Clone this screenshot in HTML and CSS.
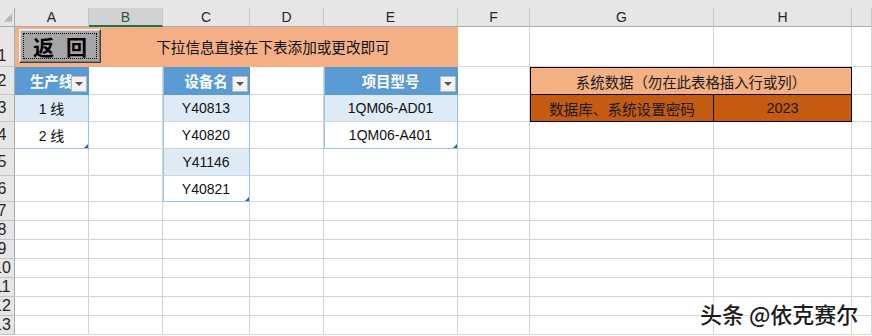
FILE: index.html
```html
<!DOCTYPE html>
<html lang="zh-CN">
<head>
<meta charset="utf-8">
<title>Sheet</title>
<link rel="stylesheet" href="styles.css">
</head>
<body>
<div class="top"></div>
<div class="sheet">
  <!-- column headers -->
  <div class="ch corner"><svg width="15" height="19" viewBox="0 0 15 19"><polygon points="13,5 13,14 4,14" fill="#b8b8b8"/></svg></div>
  <div class="ch">A</div>
  <div class="ch sel">B</div>
  <div class="ch">C</div>
  <div class="ch">D</div>
  <div class="ch">E</div>
  <div class="ch">F</div>
  <div class="ch">G</div>
  <div class="ch">H</div>
  <div class="ch"></div>

  <!-- row 1 -->
  <div class="c rh bottom"><span class="rn">1</span></div>
  <div class="c salmon">
    <div class="btn"><div class="focus"></div><span class="btn-text">返 回</span></div>
  </div>
  <div class="c salmon span4 note">下拉信息直接在下表添加或更改即可</div>
  <div class="c"></div>
  <div class="c"></div>
  <div class="c"></div>
  <div class="c"></div>

  <!-- row 2 -->
  <div class="c rh"><span class="rn">2</span></div>
  <div class="c th">生产线<span class="dd"></span></div>
  <div class="c"></div>
  <div class="c th tl">设备名<span class="dd"></span></div>
  <div class="c"></div>
  <div class="c th tl">项目型号<span class="dd"></span></div>
  <div class="c"></div>
  <div class="c span2 sys-head">系统数据（勿在此表格插入行或列）</div>
  <div class="c"></div>

  <!-- row 3 -->
  <div class="c rh"><span class="rn">3</span></div>
  <div class="c td band">1 线</div>
  <div class="c"></div>
  <div class="c td tl band">Y40813</div>
  <div class="c"></div>
  <div class="c td tl band">1QM06-AD01</div>
  <div class="c"></div>
  <div class="c sys-cell sys-left">数据库、系统设置密码</div>
  <div class="c sys-cell sys-right">2023</div>
  <div class="c"></div>

  <!-- row 4 -->
  <div class="c rh"><span class="rn">4</span></div>
  <div class="c td last">2 线<span class="handle"></span></div>
  <div class="c"></div>
  <div class="c td tl">Y40820</div>
  <div class="c"></div>
  <div class="c td tl last">1QM06-A401<span class="handle"></span></div>
  <div class="c"></div>
  <div class="c"></div>
  <div class="c"></div>
  <div class="c"></div>

  <!-- row 5 -->
  <div class="c rh"><span class="rn">5</span></div>
  <div class="c"></div>
  <div class="c"></div>
  <div class="c td tl band">Y41146</div>
  <div class="c"></div>
  <div class="c"></div>
  <div class="c"></div>
  <div class="c"></div>
  <div class="c"></div>
  <div class="c"></div>

  <!-- row 6 -->
  <div class="c rh"><span class="rn">6</span></div>
  <div class="c"></div>
  <div class="c"></div>
  <div class="c td tl last">Y40821<span class="handle"></span></div>
  <div class="c"></div>
  <div class="c"></div>
  <div class="c"></div>
  <div class="c"></div>
  <div class="c"></div>
  <div class="c"></div>

  <!-- rows 7-13 -->
  <div class="c rh"><span class="rn">7</span></div>
  <div class="c"></div><div class="c"></div><div class="c"></div><div class="c"></div><div class="c"></div><div class="c"></div><div class="c"></div><div class="c"></div><div class="c"></div>
  <div class="c rh"><span class="rn">8</span></div>
  <div class="c"></div><div class="c"></div><div class="c"></div><div class="c"></div><div class="c"></div><div class="c"></div><div class="c"></div><div class="c"></div><div class="c"></div>
  <div class="c rh"><span class="rn">9</span></div>
  <div class="c"></div><div class="c"></div><div class="c"></div><div class="c"></div><div class="c"></div><div class="c"></div><div class="c"></div><div class="c"></div><div class="c"></div>
  <div class="c rh"><span class="rn">10</span></div>
  <div class="c"></div><div class="c"></div><div class="c"></div><div class="c"></div><div class="c"></div><div class="c"></div><div class="c"></div><div class="c"></div><div class="c"></div>
  <div class="c rh"><span class="rn">11</span></div>
  <div class="c"></div><div class="c"></div><div class="c"></div><div class="c"></div><div class="c"></div><div class="c"></div><div class="c"></div><div class="c"></div><div class="c"></div>
  <div class="c rh"><span class="rn">12</span></div>
  <div class="c"></div><div class="c"></div><div class="c"></div><div class="c"></div><div class="c"></div><div class="c"></div><div class="c"></div><div class="c"></div><div class="c"></div>
  <div class="c rh"><span class="rn">13</span></div>
  <div class="c"></div><div class="c"></div><div class="c"></div><div class="c"></div><div class="c"></div><div class="c"></div><div class="c"></div><div class="c"></div><div class="c"></div>
</div>
<div class="wm">头条 @依克赛尔</div>
</body>
</html>
```

FILE: styles.css
```css
html, body {
  margin: 0;
  padding: 0;
  background: #ffffff;
  overflow: hidden;
  width: 872px;
  height: 336px;
  font-family: "Liberation Sans", "Noto Sans CJK SC", sans-serif;
}

.top {
  height: 8px;
  background: #e6e6e6;
}

.sheet {
  display: grid;
  grid-template-columns: 15px 74px 74px 87px 74px 134px 72px 184px 138px 20px;
  grid-template-rows: 19px 40px 28px 27px 27px 27px 26px repeat(7, 19px);
}

.ch {
  box-sizing: border-box;
  background: #e6e6e6;
  border-right: 1px solid #c6c6c6;
  border-bottom: 1px solid #ababab;
  display: flex;
  align-items: center;
  justify-content: center;
  font-size: 14px;
  color: #262626;
}

.ch.corner {
  justify-content: flex-start;
  align-items: flex-start;
  border-right: 1px solid #ababab;
}

.ch.sel {
  background: #d2d2d2;
  border-bottom: 2px solid #217346;
  color: #1d5c38;
}

.c {
  box-sizing: border-box;
  border-right: 1px solid #d4d4d4;
  border-bottom: 1px solid #d4d4d4;
  display: flex;
  align-items: center;
  justify-content: center;
  position: relative;
  font-size: 14px;
  color: #111111;
  white-space: nowrap;
}

.rh {
  background: #e6e6e6;
  border-right: 1px solid #ababab;
  border-bottom: 1px solid #c4c4c4;
  overflow: hidden;
  justify-content: flex-start;
  color: #262626;
  font-size: 16px;
}

.rh.bottom {
  align-items: flex-end;
  padding-bottom: 1px;
}

.rn {
  flex: none;
  width: 26px;
  margin-left: -11px;
  text-align: center;
}

.salmon {
  background: #f4b084;
  border-color: transparent;
}

.span4 { grid-column: span 4; }
.span2 { grid-column: span 2; }

.note {
  font-size: 14.6px;
  color: #111111;
}

.btn {
  position: absolute;
  left: 4px;
  top: 2px;
  width: 82px;
  height: 34px;
  box-sizing: border-box;
  background: #a6a6a6;
  border: 1px solid;
  border-color: #f4f4f4 #3c3c3c #3c3c3c #f4f4f4;
  box-shadow: inset -1px -1px 0 #7a7a7a, inset 1px 1px 0 #d8d8d8;
  z-index: 2;
  display: flex;
  align-items: center;
  justify-content: center;
}

.focus {
  position: absolute;
  left: 3px;
  top: 3px;
  right: 3px;
  bottom: 3px;
  border: 1px dotted #000000;
}

.btn-text {
  font-family: "Noto Sans CJK SC", sans-serif;
  font-weight: 700;
  font-size: 21px;
  color: #000000;
  word-spacing: 7px;
  line-height: 1;
}

.th {
  background: #5b9bd5;
  border-color: transparent;
  color: #ffffff;
  font-weight: 700;
  font-size: 14.4px;
  overflow: hidden;
}

.dd {
  position: absolute;
  right: 1px;
  bottom: 2px;
  width: 16px;
  height: 16px;
  box-sizing: border-box;
  background: #f2f2f2;
  border: 1px solid #b9b9b9;
}

.dd::after {
  content: "";
  position: absolute;
  left: 3px;
  top: 5px;
  border-left: 4px solid transparent;
  border-right: 4px solid transparent;
  border-top: 4px solid #555555;
}

.td {
  border-right-color: #9bc2e6;
  font-size: 14px;
}

.tl {
  box-shadow: inset 1px 0 0 #9bc2e6;
}

.band {
  background: #ddebf7;
}

.last {
  border-bottom-color: #9bc2e6;
}

.handle {
  position: absolute;
  right: 0;
  bottom: 0;
  width: 0;
  height: 0;
  border-left: 4px solid transparent;
  border-bottom: 4px solid #3a56b4;
}

.sys-head {
  background: #f4b183;
  border: 1px solid #000000;
  font-size: 14.4px;
  color: #1a1a1a;
}

.sys-cell {
  background: #c55a11;
  border-right: 1px solid #000000;
  border-bottom: 1px solid #000000;
  color: #1a1a1a;
}

.sys-left {
  border-left: 1px solid #000000;
  font-size: 14.6px;
}

.sys-right {
  font-size: 14.4px;
}

.wm {
  position: absolute;
  left: 700px;
  top: 299px;
  font-family: "Noto Sans CJK SC", sans-serif;
  font-size: 22px;
  font-weight: 500;
  line-height: 28px;
  color: #1c1c1c;
  text-shadow: 1px 1px 0 #ffffff, -1px -1px 0 #ffffff, 1px -1px 0 #ffffff, -1px 1px 0 #ffffff, 2px 2px 1px rgba(255,255,255,0.8);
  white-space: nowrap;
}
```
